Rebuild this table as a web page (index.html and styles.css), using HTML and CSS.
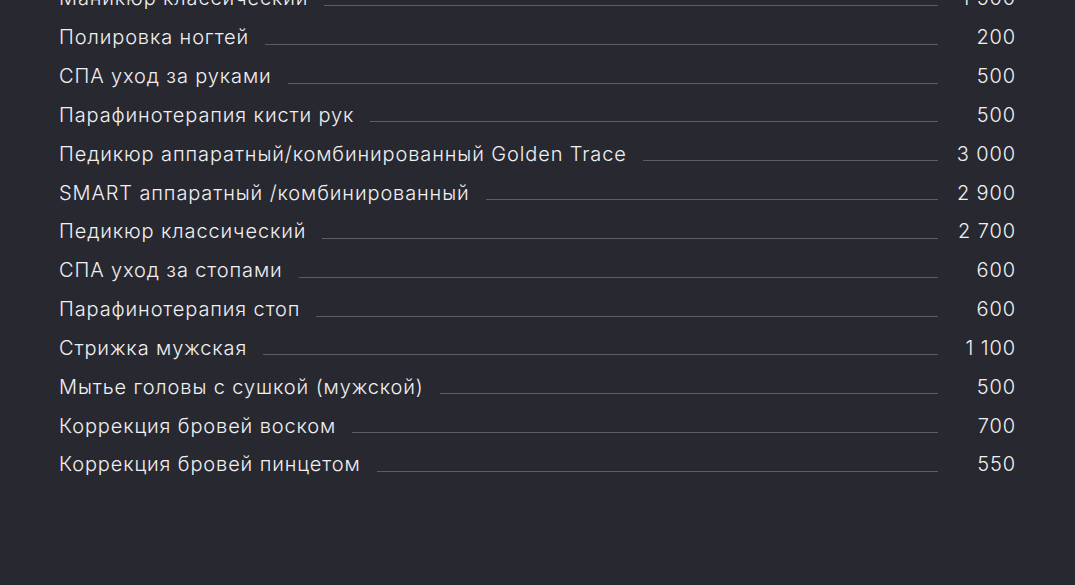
FILE: index.html
```html
<!DOCTYPE html>
<html lang="ru">
<head>
<meta charset="utf-8">
<link rel="stylesheet" href="styles.css">
</head>
<body>
<ul class="price-list">
  <li class="row"><span class="name">Маникюр классический</span><span class="fill"></span><span class="price">1 500</span></li>
  <li class="row"><span class="name">Полировка ногтей</span><span class="fill"></span><span class="price">200</span></li>
  <li class="row"><span class="name">СПА уход за руками</span><span class="fill"></span><span class="price">500</span></li>
  <li class="row"><span class="name">Парафинотерапия кисти рук</span><span class="fill"></span><span class="price">500</span></li>
  <li class="row"><span class="name">Педикюр аппаратный/комбинированный Golden Trace</span><span class="fill"></span><span class="price">3 000</span></li>
  <li class="row"><span class="name">SMART аппаратный /комбинированный</span><span class="fill"></span><span class="price">2 900</span></li>
  <li class="row"><span class="name">Педикюр классический</span><span class="fill"></span><span class="price">2 700</span></li>
  <li class="row"><span class="name">СПА уход за стопами</span><span class="fill"></span><span class="price">600</span></li>
  <li class="row"><span class="name">Парафинотерапия стоп</span><span class="fill"></span><span class="price">600</span></li>
  <li class="row"><span class="name">Стрижка мужская</span><span class="fill"></span><span class="price">1 100</span></li>
  <li class="row"><span class="name">Мытье головы с сушкой (мужской)</span><span class="fill"></span><span class="price">500</span></li>
  <li class="row"><span class="name">Коррекция бровей воском</span><span class="fill"></span><span class="price">700</span></li>
  <li class="row"><span class="name">Коррекция бровей пинцетом</span><span class="fill"></span><span class="price">550</span></li>
</ul>
</body>
</html>
```
FILE: styles.css
```css
html, body {
  margin: 0;
  padding: 0;
  background: #282830;
  height: 100%;
  overflow: hidden;
}
body {
  font-family: "Inter", "Noto Sans", sans-serif;
  font-weight: 300;
  color: #f0f0f2;
}
.price-list {
  list-style: none;
  margin: -21px 0 0 0;
  padding: 0 59px 0 59px;
  display: flex;
  flex-direction: column;
}
.row {
  height: 38.83px;
  display: flex;
  align-items: center;
  font-size: 20px;
  letter-spacing: 0.88px;
}
.name {
  white-space: nowrap;
}
.fill {
  flex: 1;
  height: 1px;
  background: #5c5c64;
  margin: 14px 0 0 16px;
}
.price {
  width: 78px;
  text-align: right;
  white-space: nowrap;
}
```
